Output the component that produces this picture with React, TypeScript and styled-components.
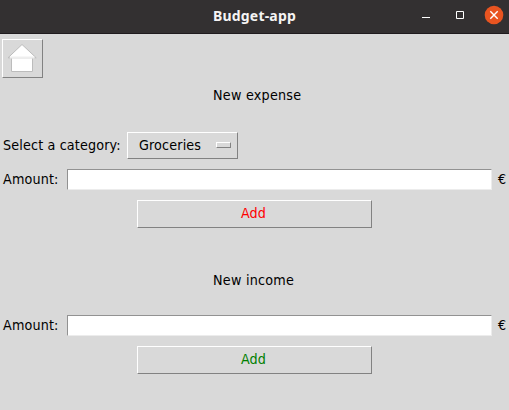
import React from 'react';
import styled, { createGlobalStyle } from 'styled-components';

const GlobalStyle = createGlobalStyle`
  * { box-sizing: border-box; }
  body { margin: 0; background: #d9d9d9; overflow: hidden; }
`;

const Window = styled.div`
  width: 509px;
  height: 410px;
  display: flex;
  flex-direction: column;
  background: #d9d9d9;
  color: #000;
  font: 14.2px/20px 'DejaVu Sans Condensed', 'DejaVu Sans', sans-serif;
  font-stretch: condensed;
  letter-spacing: 0.15px;
`;

const TitleBar = styled.header`
  flex: none;
  height: 34px;
  display: grid;
  grid-template-columns: 1fr auto 1fr;
  align-items: start;
  background: #333031;
  border-bottom: 1px solid #1f1b1e;
`;

const Title = styled.h1`
  grid-column: 2;
  margin: 0;
  padding-top: 6px;
  color: #f5f4f4;
  font: bold 14px/20px 'Noto Sans', sans-serif;
  letter-spacing: 0.2px;
`;

const Controls = styled.div`
  justify-self: end;
  display: flex;
  gap: 14px;
  padding: 5px 5px 0 0;
`;

const WindowButton = styled.button`
  width: 20px;
  height: 20px;
  padding: 0;
  border: 0;
  background: none;
  svg { display: block; }
`;

const RaisedButton = styled.button`
  display: flex;
  align-items: center;
  padding: 0;
  border: 1px solid;
  border-color: #fff #828282 #828282 #fff;
  border-radius: 0;
  background: #d9d9d9;
  color: #000;
  font: inherit;
  letter-spacing: inherit;
`;

const HomeButton = styled(RaisedButton)`
  flex: none;
  width: 41px;
  height: 39px;
  margin: 5px 0 0 2px;
  svg { display: block; flex: none; }
`;

const Section = styled.section<{ $top: number }>`
  margin-top: ${(p) => p.$top}px;
`;

const Heading = styled.h2<{ $gap: number }>`
  margin: 0 0 ${(p) => p.$gap}px 213px;
  font: inherit;
  letter-spacing: 0.25px;
  white-space: nowrap;
`;

const CategoryRow = styled.div`
  display: flex;
  align-items: center;
  height: 27px;
  margin-bottom: 10px;
  padding-left: 3px;
`;

const CategoryLabel = styled.label`
  width: 124px;
  padding-bottom: 2px;
  white-space: nowrap;
`;

const CategoryMenu = styled(RaisedButton)`
  width: 111px;
  height: 27px;
  justify-content: space-between;
  padding: 0 6px 0 11px;
`;

const CategoryValue = styled.span`
  padding-bottom: 2px;
`;

const Indicator = styled.span`
  width: 15px;
  height: 6px;
  margin-bottom: 1px;
  border: 1px solid;
  border-color: #fff #828282 #828282 #fff;
`;

const AmountRow = styled.div`
  display: grid;
  grid-template: 21px / 64px 425px auto;
  align-items: start;
  padding-left: 3px;
`;

const AmountLabel = styled.label`
`;

const AmountInput = styled.input`
  width: 425px;
  height: 21px;
  padding: 0 3px;
  border: 1px solid;
  border-color: #929292 #ececec #ececec #929292;
  border-radius: 0;
  outline: 0;
  background: #fff;
  font: inherit;
`;

const Currency = styled.span`
  padding-left: 6px;
`;

const AddButton = styled(RaisedButton)<{ $color: string }>`
  width: 235px;
  height: 28px;
  margin: 10px 0 0 137px;
  justify-content: center;
  padding: 0 2px 2px 0;
  color: ${(p) => p.$color};
`;

function AmountField({ id }: { id: string }) {
  return (
    <AmountRow>
      <AmountLabel htmlFor={id}>Amount:</AmountLabel>
      <AmountInput id={id} />
      <Currency>€</Currency>
    </AmountRow>
  );
}

export default function App() {
  return (
    <>
      <GlobalStyle />
      <Window>
        <TitleBar>
          <Title>Budget-app</Title>
          <Controls>
            <WindowButton aria-label="Minimize">
              <svg width="20" height="20"><path d="M6 12.5h8" stroke="#fff" /></svg>
            </WindowButton>
            <WindowButton aria-label="Maximize">
              <svg width="20" height="20"><path d="M6.5 6.5h7v7h-7z" fill="none" stroke="#fff" /></svg>
            </WindowButton>
            <WindowButton aria-label="Close">
              <svg width="20" height="20">
                <circle cx="10" cy="10" r="9.3" fill="#e95420" />
                <path d="M6.3 6.3l7.4 7.4M13.7 6.3l-7.4 7.4" stroke="#fff" strokeWidth="1.4" />
              </svg>
            </WindowButton>
          </Controls>
        </TitleBar>
        <HomeButton aria-label="Home">
          <svg width="39" height="37">
            <path d="M8.5 17.5h21v14h-21z" fill="#fff" stroke="#bcbcbc" />
            <path d="M19 4.5L5 17.8h28.2z" fill="#fff" stroke="#bcbcbc" />
            <path d="M7 17.5h24.5" stroke="#eeeeee" strokeWidth="2" />
          </svg>
        </HomeButton>
        <Section $top={7}>
          <Heading $gap={27}>New expense</Heading>
          <CategoryRow>
            <CategoryLabel>Select a category:</CategoryLabel>
            <CategoryMenu>
              <CategoryValue>Groceries</CategoryValue>
              <Indicator />
            </CategoryMenu>
          </CategoryRow>
          <AmountField id="expense" />
          <AddButton $color="#ff0000">Add</AddButton>
        </Section>
        <Section $top={42}>
          <Heading $gap={25}>New income</Heading>
          <AmountField id="income" />
          <AddButton $color="#008000">Add</AddButton>
        </Section>
      </Window>
    </>
  );
}
